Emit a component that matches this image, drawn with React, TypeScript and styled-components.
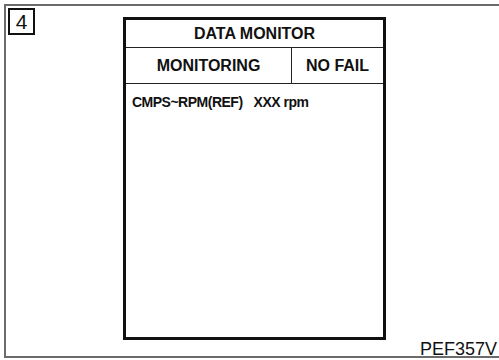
import styled, { createGlobalStyle } from 'styled-components';

const Global = createGlobalStyle`
  html, body {
    margin: 0;
    padding: 0;
    background: #ffffff;
    overflow: hidden;
  }
  body {
    font-family: "Liberation Sans", Arial, sans-serif;
    color: #111111;
  }
`;

const Frame = styled.div`
  box-sizing: border-box;
  margin: 4px 0 0 4px;
  width: 495px;
  height: 354px;
  border: 2px solid #6b6b6b;
  border-right: none;
  display: flex;
  flex-direction: column;
`;

const TopRow = styled.div`
  display: flex;
  align-items: flex-start;
  padding: 2px 0 0 2px;
`;

const StepBadge = styled.div`
  box-sizing: border-box;
  width: 27px;
  height: 27px;
  border: 2px solid #111111;
  display: flex;
  align-items: center;
  justify-content: center;
  font-size: 21px;
  line-height: 1;
`;

const Screen = styled.div`
  box-sizing: border-box;
  margin: 9px 0 0 88px;
  width: 263px;
  height: 323px;
  border: 3px solid #111111;
  display: flex;
  flex-direction: column;
`;

const TitleRow = styled.div`
  height: 27px;
  border-bottom: 1px solid #222222;
  display: flex;
  align-items: center;
  justify-content: center;
  font-weight: bold;
  font-size: 16px;
`;

const ModeRow = styled.div`
  height: 35px;
  border-bottom: 1px solid #222222;
  display: grid;
  grid-template-columns: 166px 1fr;
`;

const ModeCell = styled.div<{ $divider?: boolean }>`
  display: flex;
  align-items: center;
  justify-content: center;
  font-weight: bold;
  font-size: 16px;
  border-right: ${(p) => (p.$divider ? '1px solid #222222' : 'none')};
`;

const DataRow = styled.div`
  display: flex;
  gap: 11px;
  padding: 10px 0 0 6px;
  font-weight: bold;
  font-size: 14px;
  letter-spacing: -0.5px;
`;

const FigureCode = styled.div`
  margin-top: auto;
  align-self: flex-end;
  padding-right: 2px;
  font-size: 18px;
  line-height: 18px;
`;

const items = [{ label: 'CMPS~RPM(REF)', value: 'XXX rpm' }];

export default function App() {
  return (
    <>
      <Global />
      <Frame>
        <TopRow>
          <StepBadge>4</StepBadge>
          <Screen>
            <TitleRow>DATA MONITOR</TitleRow>
            <ModeRow>
              <ModeCell $divider>MONITORING</ModeCell>
              <ModeCell>NO FAIL</ModeCell>
            </ModeRow>
            {items.map((it) => (
              <DataRow key={it.label}>
                <span>{it.label}</span>
                <span>{it.value}</span>
              </DataRow>
            ))}
          </Screen>
        </TopRow>
        <FigureCode>PEF357V</FigureCode>
      </Frame>
    </>
  );
}
